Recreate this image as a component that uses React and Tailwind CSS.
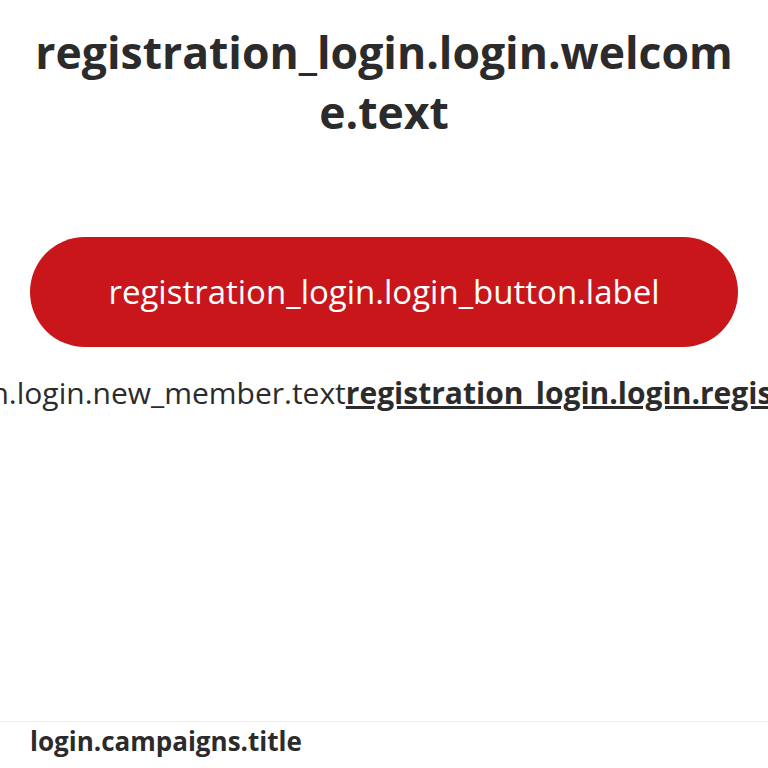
export default function App() {
  return (
    <div className="min-h-[768px] bg-white flex flex-col overflow-hidden" style={{ fontFamily: '"Open Sans", sans-serif' }}>
      <div className="px-[30px] pt-[22px]">
        <h1 className="text-center text-[44.5px] leading-[60px] font-bold text-[#2b2b2b] break-all">
          registration_login.login.welcome.text
        </h1>
      </div>
      <div className="px-[30px] mt-[95px]">
        <button className="w-full h-[110px] rounded-full bg-[#c8161b] text-white text-[33px] font-normal">
          registration_login.login_button.label
        </button>
      </div>
      <div className="flex justify-center mt-[24px] text-[30px] leading-[44px] text-[#2b2b2b] whitespace-nowrap">
        <span>registration_login.login.new_member.text</span>
        <a className="font-bold underline">registration_login.login.register_button.text</a>
      </div>
      <div className="flex-1" />
      <div className="border-t border-[#eeeeee] px-[30px] pt-0 pb-[8px]">
        <h2 className="text-[26px] leading-[38px] font-bold text-[#2b2b2b]">login.campaigns.title</h2>
      </div>
    </div>
  );
}
